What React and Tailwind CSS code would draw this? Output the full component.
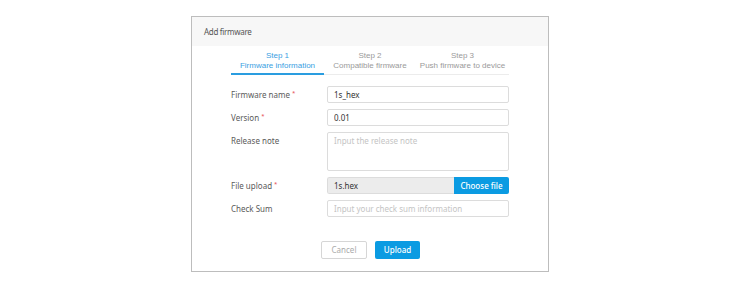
import { useState } from 'react'

const steps = [
  { n: 'Step 1', t: 'Firmware information' },
  { n: 'Step 2', t: 'Compatible firmware' },
  { n: 'Step 3', t: 'Push firmware to device' },
]

function Label({ children, required }) {
  return (
    <div className="w-[96px] shrink-0 text-[8px] text-[#5a5a5a]">
      {children}
      {required && <span className="text-[#e5484d] text-[6px] align-top ml-[2px]">*</span>}
    </div>
  )
}

export default function App() {
  const [name, setName] = useState('1s_hex')
  const [version, setVersion] = useState('0.01')

  return (
    <div className="w-[740px] h-[289px] bg-white font-['Noto_Sans',sans-serif] pt-[16px]">
      <div className="ml-[191px] w-[358px] h-[256px] border border-[#bdbdbd] bg-white flex flex-col">
        {/* header */}
        <div className="h-[29px] bg-[#f7f7f7] flex items-center px-[12px] text-[8px] tracking-[-0.3px] text-[#555]">
          Add firmware
        </div>

        {/* steps */}
        <div className="mx-[39px] mt-[5px] flex border-b border-[#ececec] font-['Liberation_Sans',sans-serif]">
          {steps.map((s, i) => (
            <div
              key={s.n}
              className={
                'flex flex-col items-center leading-[9.5px] text-[8px] pb-[3px] ' +
                (i === 0
                  ? 'w-[93px] text-[#3aa0e2] border-b-2 border-[#2a9de0] -mb-px'
                  : i === 1
                  ? 'w-[92px] text-[#9a9a9a]'
                  : 'w-[93px] text-[#9a9a9a]')
              }
            >
              <span>{s.n}</span>
              <span>{s.t}</span>
            </div>
          ))}
        </div>

        {/* form */}
        <div className="mx-[39px] mt-[11px] flex flex-col gap-[6px]">
          <div className="flex items-center">
            <Label required>Firmware name</Label>
            <input
              value={name}
              onChange={(e) => setName(e.target.value)}
              className="w-[182px] h-[17px] border border-[#dcdcdc] rounded-[2px] px-[6px] text-[8px] text-[#333] outline-none"
            />
          </div>
          <div className="flex items-center">
            <Label required>Version</Label>
            <input
              value={version}
              onChange={(e) => setVersion(e.target.value)}
              className="w-[182px] h-[17px] border border-[#dcdcdc] rounded-[2px] px-[6px] text-[8px] text-[#333] outline-none"
            />
          </div>
          <div className="flex items-start">
            <div className="pt-[3px]">
              <Label>Release note</Label>
            </div>
            <textarea
              placeholder="Input the release note"
              className="w-[182px] h-[39px] border border-[#dcdcdc] rounded-[2px] px-[6px] py-[2px] text-[8px] text-[#333] placeholder:text-[#c4c4c4] outline-none resize-none"
            />
          </div>
          <div className="flex items-center">
            <Label required>File upload</Label>
            <div className="w-[182px] h-[17px] flex rounded-[2px] overflow-hidden">
              <div className="flex-1 bg-[#ececec] border border-[#dcdcdc] border-r-0 rounded-l-[2px] px-[6px] flex items-center text-[8px] text-[#333]">
                1s.hex
              </div>
              <button className="w-[55px] bg-[#0b9be2] text-white text-[8px] font-medium">
                Choose file
              </button>
            </div>
          </div>
          <div className="flex items-center">
            <Label>Check Sum</Label>
            <input
              placeholder="Input your check sum information"
              className="w-[182px] h-[17px] border border-[#dcdcdc] rounded-[2px] px-[6px] text-[8px] text-[#333] placeholder:text-[#c4c4c4] outline-none"
            />
          </div>
        </div>

        {/* actions */}
        <div className="mt-[24px] flex justify-center gap-[8px] pl-[1px]">
          <button className="w-[46px] h-[18px] border border-[#d6d6d6] rounded-[2px] bg-white text-[8px] text-[#aaa]">
            Cancel
          </button>
          <button className="w-[45px] h-[18px] rounded-[2px] bg-[#0b9be2] text-white text-[8px] font-medium">
            Upload
          </button>
        </div>
      </div>
    </div>
  )
}
